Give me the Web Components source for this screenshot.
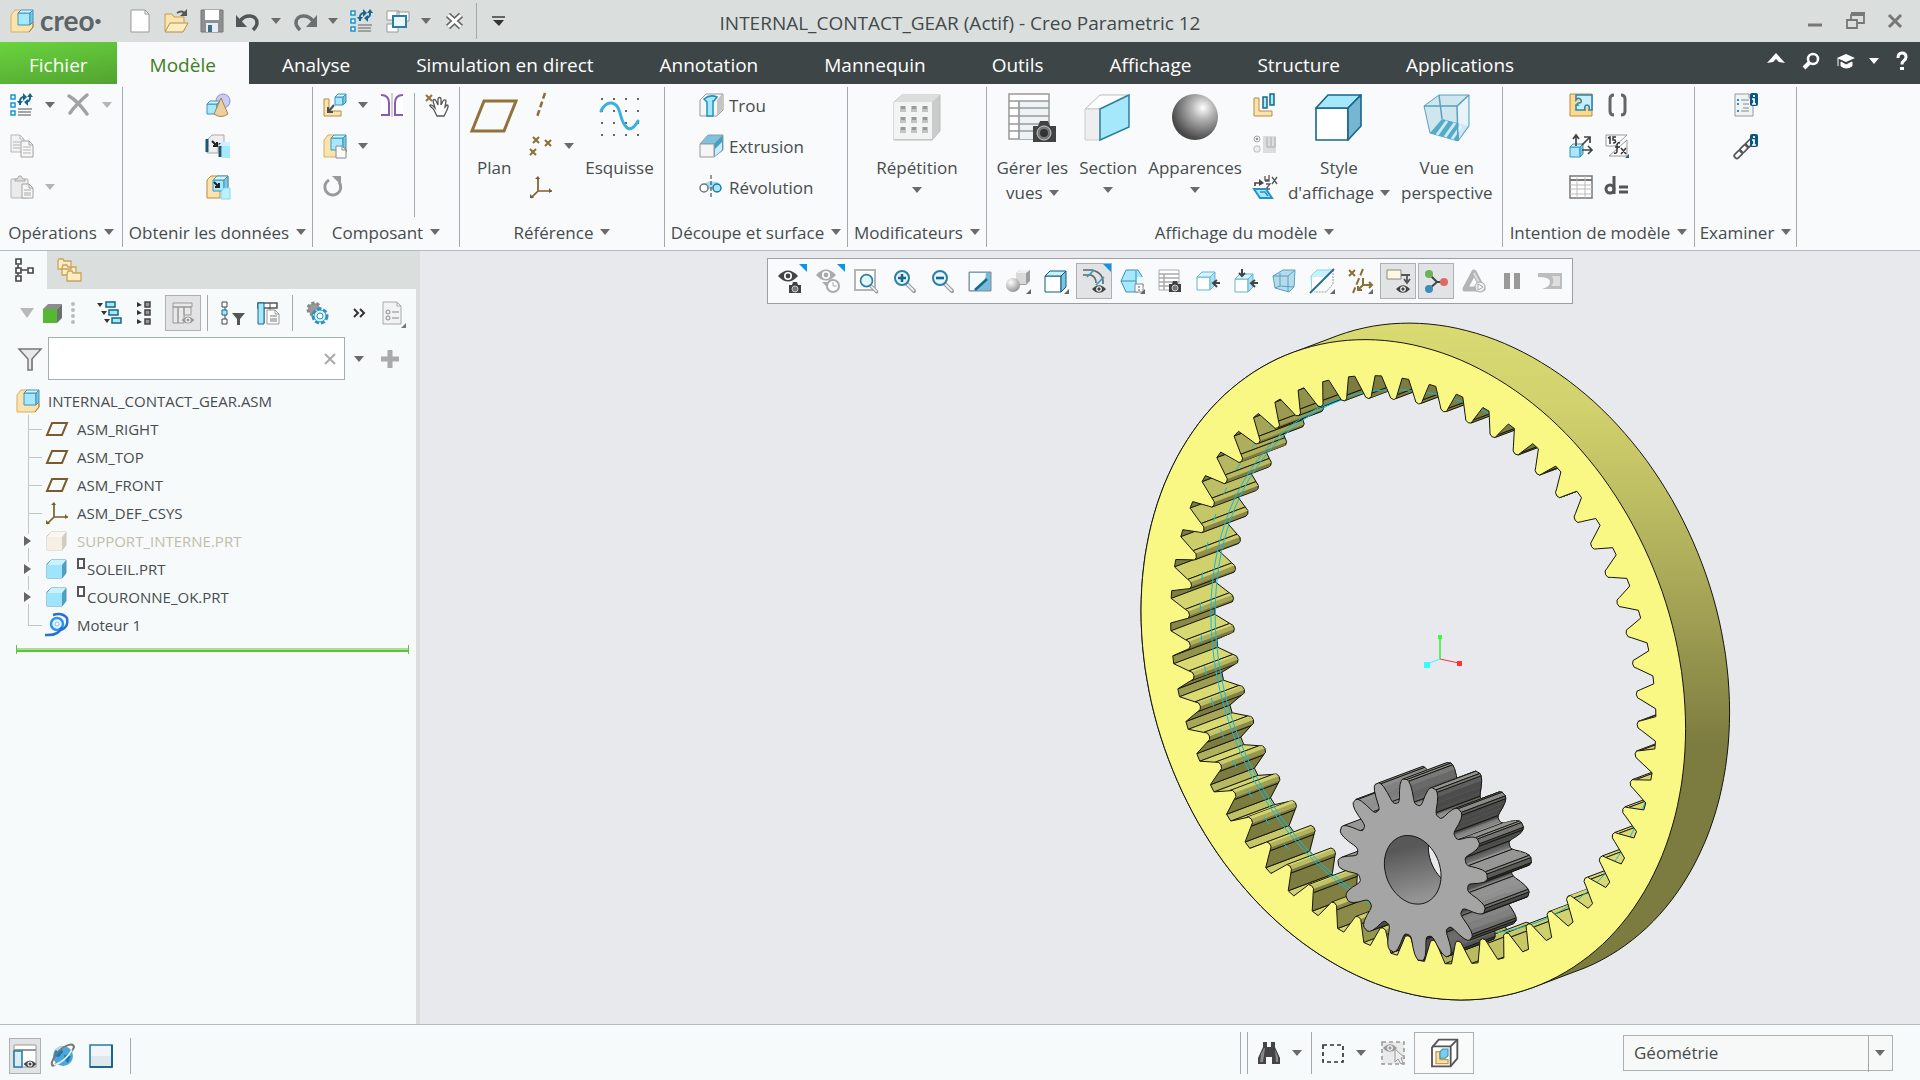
<!DOCTYPE html>
<html lang="fr">
<head>
<meta charset="utf-8">
<title>INTERNAL_CONTACT_GEAR (Actif) - Creo Parametric 12</title>
<style>
html,body{margin:0;height:100%}
body{font-family:"Open Sans","Noto Sans",sans-serif;font-size:17px;color:#474c4e;
--line:#b0bbbd;--sep:#a3a9ab;--panel:#f6fafb;--ribbon:#f8fafc;--bar:#dadfde;--dark:#3e4546}
</style>
</head>
<body>
<creo-app></creo-app>
<script>
const ICONS = (() => {
  const B = '#a6e8ff', D = '#17668c', T = '#fbe3ae', TD = '#b98c3c', K = '#4a4f52';
  const cube = (x, y, s, d, f = B, st = '#3f93b8', top = '#d8f6ff', side = '#7dc6e6') =>
    `<g stroke="${st}" stroke-linejoin="round"><path d="M${x} ${y + d}h${s}v${s}h${-s}z" fill="${f}"/><path d="M${x} ${y + d}l${d} ${-d}h${s}l${-d} ${d}z" fill="${top}"/><path d="M${x + s} ${y + d}l${d} ${-d}v${s}l${-d} ${d}z" fill="${side}"/></g>`;
  const eye = (x, y, w, c = '#444') => `<g transform="translate(${x} ${y}) scale(${w / 20})"><path d="M-10 0Q0-11 10 0Q0 11-10 0z" fill="${c}"/><circle r="4" fill="#fff"/><circle r="2.4" fill="${c}"/></g>`;
  const cam = (x, y) => `<g transform="translate(${x} ${y})"><path d="M0 3h3l1-3h4l1 3h3v8H0z" fill="#3e4042"/><circle cx="6" cy="7" r="3" fill="#777" stroke="#ccc"/></g>`;
  const tick = '<path d="M25 20v5h-5z" fill="#666"/>';
  const page = (x, y, w, h, f = '#fff', s = '#999') => `<path d="M${x} ${y}h${w - 4}l4 4v${h - 4}h${-w}z" fill="${f}" stroke="${s}"/><path d="M${x + w - 4} ${y}v4h4" fill="none" stroke="${s}"/>`;
  const mag = (s = '') => `<path d="M15 15l7 7" stroke="#999" stroke-width="4" stroke-linecap="round"/><path d="M15 15l7 7" stroke="#eee" stroke-width="2"/><circle cx="10" cy="9" r="7" fill="#e4f6fd" stroke="#2d7ea6" stroke-width="2"/>${s}`;
  const asm = `<path d="M1 6l4-5h6v13h9l3 1v3l-4 5H1z" fill="${T}" stroke="#d9ae62"/><path d="M19 23l4-5v-5" stroke="#a97b2c" fill="none"/>${cube(8, 1, 12, 3)}`;
  const S24 = {
    asm,
    regen: `<g fill="#fff" stroke="#1698cf" stroke-width="1.5"><path d="M1 2h4v4H1zM1 10h4v4H1zM1 18h4v4H1z"/></g><path d="M8 16h14M8 19h13M8 22h13" stroke="#8b8b8b" stroke-width="1.5"/><path d="M10 12V8a4 4 0 0 1 4-4" fill="none" stroke="${D}" stroke-width="2"/><path d="M13 0l4 4-4 4zM7 8h6l-3 4z" fill="${D}"/><path d="M20 2v3a4 4 0 0 1-4 4" fill="none" stroke="${D}" stroke-width="2"/><path d="M23 4h-6l3-4zM18 6v7l-4-4z" fill="${D}"/>`,
    del: `<path d="M2 3c7 4 13 11 18 18M20 2C13 8 8 13 3 20" stroke="#a2a2a2" stroke-width="3.5" fill="none" stroke-linecap="round"/>`,
    copy: page(1, 1, 13, 17, '#f2f2f2', '#b8b8b8') + page(11, 7, 12, 16, '#f7f7f7', '#a2a2a2') + `<path d="M3 8h7M3 11h7M3 14h7M13 13h8M13 16h8M13 19h8" stroke="#b4b4b4"/>`,
    paste: `<rect x="1" y="4" width="17" height="19" rx="1" fill="#ebebeb" stroke="#b5b5b5"/><path d="M5 6V4h2l2-3h2l2 3h2v2z" fill="#ddd" stroke="#aaa"/>` + page(12, 9, 11, 14, '#f7f7f7', '#a2a2a2') + `<path d="M14 15h7M14 18h7M14 20h7" stroke="#aaa"/>`,
    shapes: `<circle cx="17" cy="8" r="7" fill="#c9cdf3" stroke="#8a90cf"/>${cube(1, 8, 10, 3)}<path d="M15 5l7 16q-7 5-14 0z" fill="#ecd0a0" stroke="#a98549"/>`,
    merge: `<path d="M1 6l5-5h12v12h-6v6H1z" fill="#eee" stroke="#aaa"/><path d="M1 5v13M14 9v14" stroke="#1c5677" stroke-width="3"/><path d="M6 7l5 5M11 8v4H7" stroke="#222" stroke-width="2"/><path d="M12 12l4-4h8v4z" fill="#cdf2ff"/><path d="M16 12h8v12h-8z" fill="${B}"/>`,
    shrink: `<path d="M1 5l4-4h17v14h-8v8H1z" fill="${T}" stroke="${TD}"/>${cube(7, 1, 11, 4)}<path d="M8 7l5 5M13 8v4H9" stroke="#222" stroke-width="2"/><path d="M15 17l3-4h6v11h-9z" fill="#baf0ff" stroke="#8fd3ee"/>`,
    assemble: `<path d="M1 6h5v12h12v5H1z" fill="${T}" stroke="${TD}"/>${cube(12, 1, 8, 3)}<path d="M11 12l-5 6M5 14v5h5" stroke="${K}" stroke-width="2" fill="none"/>`,
    create: asm + page(13, 12, 10, 12, '#fafafa', '#888'),
    mirror: `<path d="M1 2c5 0 8 3 8 8v12H1M23 2c-5 0-8 3-8 8v12h8" fill="#fff" stroke="#8a5cae" stroke-width="2"/><path d="M12 0v24" stroke="#aaa"/>`,
    hand: `<path d="M1 2l6 6M7 2L1 8" stroke="#93713a" stroke-width="2"/><path d="M9 17c-2-3-5-4-4-5 2-1 4 2 5 3L8 8c0-2 2-2 3 0l2 4V6c0-2 3-2 3 0v6l2-4c1-2 3-1 3 0l-1 6 2-2c2 0 1 3-1 7l-2 4h-7z" fill="#fff" stroke="#555" stroke-width="1.3"/>`,
    update: `<path d="M6 5a8 8 0 1 0 10 2" fill="none" stroke="#999" stroke-width="3"/><path d="M9 1h9v9z" fill="#999"/>`,
    axis: `<path d="M16 0L8 24" stroke="#8d6c35" stroke-width="2.5" stroke-dasharray="6 3"/>`,
    points: `<g stroke="#8d6c35" stroke-width="2"><path d="M4 3l6 6M10 3l-6 6M16 6l6 6M22 6l-6 6M1 15l6 6M7 15l-6 6"/></g>`,
    csys: `<g stroke="#7c5d2c" stroke-width="1.7" fill="#7c5d2c"><path d="M9 2v14h14M9 16l-7 7" fill="none"/><path d="M6 4l3-3 2 3zM20 13l3 3-3 2zM1 19v4h4z" stroke="none"/></g>`,
    hole: `<path d="M1 7l6-6h17v16l-6 6H1z" fill="#f6f6f6" stroke="#999"/><path d="M18 7v16l5-6V1z" fill="#c4c4c4"/><path d="M5 6q6-5 13-2l-3 4h-1v15H8V9z" fill="${B}" stroke="#258fbd" stroke-width="1.5"/>`,
    extrude: `<path d="M1 10l8-9h15L15 10z" fill="#7ac4e2" stroke="#999"/><path d="M15 10l9-9v15l-9 7z" fill="#3fa0cc" stroke="#999"/><path d="M16 15l7-7v8l-7 6z" fill="#c5efff"/><path d="M1 10h14v13H1z" fill="#f5f5f5" stroke="#999"/>`,
    revolve: `<path d="M4 11q2-6 14-4l4 3-6 4H8z" fill="#9bdcf5"/><circle cx="5" cy="13" r="4" fill="#fff" stroke="#777" stroke-width="1.5"/><circle cx="18" cy="13" r="4" fill="${B}" stroke="#2079a3" stroke-width="1.5"/><path d="M12 0v24" stroke="#333" stroke-dasharray="4 2"/>`,
    explode: `<path d="M1 5h5v13h13v5H1z" fill="${T}" stroke="${TD}"/><g fill="${B}" stroke="${D}" stroke-width="1.5"><path d="M10 4h4v11h-4zM17 1h4v11h-4z"/></g>`,
    exgray: `<circle cx="4" cy="5" r="3" fill="#eee" stroke="#aaa"/><circle cx="4" cy="5" r="1" fill="#777"/><rect x="1" y="12" width="6" height="6" rx="2" fill="#eee" stroke="#bbb"/><path d="M10 2h13v17H10z" fill="#ddd"/><path d="M14 3v10h8V3M18 3v9" fill="none" stroke="#aaa"/>`,
    xyz: `<path d="M2 11V8h6" stroke="#444" stroke-width="1.6" fill="none"/><path d="M6 4l5 4-5 3z" fill="#444"/><path d="M12 1v4h4M16 0v6h-4M19 2l5 7M24 2l-5 7M13 9h4l-4 5h4" stroke="#555" stroke-width="1.3" fill="none"/><path d="M1 14h12l6 9H7z" fill="${B}" stroke="#2492c4" stroke-width="2"/><path d="M7 17h5l3 4" stroke="#2492c4" fill="none" stroke-width="1.5"/>`,
    puzzle: `<path d="M1 1h22v22H1z" fill="#fbd98e" stroke="${TD}"/><path d="M7 2h16v15h-3q1-5-2-5t-2 5H7v-5h2q-2-2 1-2 3 0 2-3-2-3-4-1l-1 1z" fill="#c5efff" stroke="#3186ab" stroke-width="1.6"/>`,
    brackets: `<path d="M9 2Q5 2 5 6v12q0 4 4 4M16 2q4 0 4 4v12q0 4-4 4" fill="none" stroke="#666" stroke-width="3"/>`,
    arrows: `${cube(1, 10, 10, 3)}<g stroke="#444" stroke-width="1.7" fill="none"><path d="M7 12V2M4 5l3-4 3 4M13 11l7-7M15 3h6v6M13 16h9M19 12l4 4-4 4"/></g>`,
    fx: `<path d="M1 1h21L10 12H1z" fill="#fff" stroke="#999"/><path d="M22 6v16H4z" fill="#fff" stroke="#999"/><path d="M3 4l2-1v7M11 3H8v3h2q2 3-2 3M15 9q-3-1-3 3v5q0 3-3 2M10 13h5M16 14l5 6M21 14l-5 6" fill="none" stroke="#333" stroke-width="1.5"/><path d="M24 20v4h-4z" fill="${D}"/>`,
    table: `<path d="M1 1h22v22H1z" fill="#fff" stroke="#777" stroke-width="1.5"/><path d="M1 5h22" stroke="#777" stroke-width="2"/><path d="M1 10h22M1 14h22M1 19h22M8 1v22M16 1v22" stroke="#bbb"/>`,
    deq: `<path d="M9 1v18" stroke="#555" stroke-width="3"/><circle cx="5" cy="14" r="4" fill="none" stroke="#555" stroke-width="3"/><path d="M14 12h9M14 17h9" stroke="#555" stroke-width="3"/>`,
    info: page(1, 1, 18, 22, '#eef3f5') + `<path d="M3 7h2M3 11h2M3 18h2" stroke="#2492c4" stroke-width="2"/><path d="M7 7h8M9 11h6M9 15h6M7 18h8" stroke="#888"/><rect x="16" y="0" width="8" height="13" rx="2" fill="#0b577b"/><path d="M20 2v2M18 6h2v5M18 11h4" stroke="#fff" stroke-width="1.7" fill="none"/>`,
    chain: `<g fill="none" stroke="#555" stroke-width="1.7" transform="rotate(-45 10 14)"><rect x="-3" y="12" width="9" height="5" rx="2"/><rect x="5" y="12" width="9" height="5" rx="2"/><rect x="13" y="12" width="9" height="5" rx="2"/></g><rect x="16" y="0" width="8" height="13" rx="2" fill="#0b577b"/><path d="M20 2v2M18 6h2v5M18 11h4" stroke="#fff" stroke-width="1.7" fill="none"/>`,
    newf: page(3, 1, 18, 22),
    open: `<path d="M1 22V5h7l2 3h10v5" fill="${T}" stroke="#c59a4d"/><path d="M1 23l5-9h18l-5 9z" fill="#fdecc4" stroke="#b98c3c"/><path d="M13 4q6-4 8 2" fill="none" stroke="#555" stroke-width="2"/><path d="M23 0v7h-7z" fill="#555"/>`,
    save: `<path d="M1 1h22v22H1z" fill="#8d8f90" stroke="#777"/><path d="M5 1h14v10H5z" fill="#fff"/><path d="M6 14h12v9H6z" fill="#e6eef2"/><path d="M8 16h4v7H8z" fill="#3f6f88"/>`,
    undo: `<path d="M4 12c5-7 17-7 17 2 0 3-2 5-4 7" fill="none" stroke="#515658" stroke-width="3.5"/><path d="M0 6v12h11z" fill="#515658"/>`,
    redo: `<path d="M20 12C15 5 3 5 3 14c0 3 2 5 4 7" fill="none" stroke="#6c7072" stroke-width="3.5"/><path d="M24 6v12H13z" fill="#6c7072"/>`,
    windows: `<g fill="#fff" stroke="#999"><path d="M1 2h12v9H1zM11 3h12v9H11zM1 15h11v8H1z"/></g><path d="M7 7h13v11H7z" fill="#eaf6fb" stroke="#2a7fa6" stroke-width="2"/>`,
    closew: `<path d="M5 6l13 12M18 6L5 18" stroke="#666" stroke-width="6"/><path d="M5 6l13 12M18 6L5 18" stroke="#fff" stroke-width="3"/>`,
    qat: `<path d="M6 8h13" stroke="#444" stroke-width="1.6"/><path d="M7 11h11l-5 6z" fill="#333"/>`,
    min: `<path d="M5 16h14" stroke="#777" stroke-width="3"/>`,
    restore: `<path d="M8 6h13v8H8z" fill="none" stroke="#777" stroke-width="1.8"/><path d="M8 4h14" stroke="#777" stroke-width="2"/><path d="M4 11h10v8H4z" fill="#dadfde" stroke="#777" stroke-width="1.8"/>`,
    close: `<path d="M6 6l12 12M18 6L6 18" stroke="#777" stroke-width="3"/>`,
    chev: `<path d="M3 14l9-10 9 10-6-1-3-3-3 3z" fill="#fff"/>`,
    search: `<circle cx="14" cy="10" r="5" fill="none" stroke="#fff" stroke-width="2.5"/><path d="M10 14l-5 5" stroke="#fff" stroke-width="4"/>`,
    hat: `<path d="M12 5l9 4-9 4-9-4z" fill="#fff"/><path d="M7 13l5 3 6-3v4q-6 4-11 0zM4 9v8" fill="#fff" stroke="#fff"/>`,
    help: `<path d="M8 9q0-5 4-5t4 4q0 2-2 3.500t-2 4" fill="none" stroke="#fff" stroke-width="3"/><path d="M10 18h4v3h-4z" fill="#fff"/>`,
    tree: `<g fill="#fff" stroke="#444" stroke-width="1.6"><path d="M6 7v3M6 14v3M9 12h6"/><path d="M4 1h5v5H4zM4 10h5v5H4zM4 18h5v5H4zM16 10h5v5h-5z"/></g>`,
    folders: `<g fill="#fdecc4" stroke="#c9a35b" stroke-width="1.3"><path d="M1 3l1-2h4l1 2h7v8H1zM5 10l1-3h4l1 2h8v8H5z"/><path d="M10 16l1-3h4l1 2h8v8H10z"/></g>`,
    green: `<path d="M3 8h14v14H3z" fill="#56b832"/><path d="M3 8l5-5h14l-5 5z" fill="#8b8d8d"/><path d="M17 8l5-5v14l-5 5z" fill="#6e7070"/>`,
    dots: `<g fill="#bbb"><circle cx="12" cy="3" r="2"/><circle cx="12" cy="9" r="2"/><circle cx="12" cy="15" r="2"/><circle cx="12" cy="21" r="2"/></g>`,
    layers: `<g fill="${B}" stroke="${D}" stroke-width="1.5"><path d="M9 1h9v5H9zM12 9h9v5h-9zM15 17h9v5h-9z"/></g><path d="M0 2h6l-3 4zM4 10h6l-3 4zM7 18h6l-3 4z" fill="#333"/>`,
    expand: `<g fill="#999" stroke="#444" stroke-width="1.5"><path d="M12 1h5v5h-5zM12 9h5v5h-5zM12 18h5v5h-5z"/></g><path d="M4 1l5 3-5 2zM4 9l5 3-5 2zM4 18l5 3-5 2z" fill="#333"/>`,
    cols: `<path d="M2 2h19v4H2zM2 6h5v16H2zM7 6h6v16H7zM13 6h7v8h-7z" fill="#e8e8e8" stroke="#999"/>${eye(17, 19, 13, '#999')}`,
    filter: `<g fill="#fff" stroke="#444"><path d="M4 5v14"/><path d="M1 1h5v5H1zM1 18h5v5H1z"/><path d="M1 9h5v5H1z" fill="${B}" stroke="${D}"/></g><path d="M11 12h13l-5 6v6h-3v-6z" fill="#555"/>`,
    colset: `<path d="M1 2h19v5H1z" fill="#fff" stroke="#555" stroke-width="1.5"/><path d="M7 7v15M13 2v8" stroke="#555"/><path d="M1 2h6v21H1z" fill="${B}" stroke="${D}"/>${page(10, 9, 12, 14)}<path d="M13 15h7M13 18h7M13 20h7" stroke="#777"/>`,
    gears: `<circle cx="9" cy="8" r="6" fill="#999" stroke="#888" stroke-width="3" stroke-dasharray="3 2"/><circle cx="15" cy="15" r="7" fill="#fff" stroke="#2b91c0" stroke-width="3" stroke-dasharray="4 2"/><circle cx="15" cy="15" r="6" fill="#d7f3ff" stroke="#2b91c0"/><circle cx="15" cy="15" r="3" fill="#fff" stroke="#2b91c0"/>`,
    more: `<path d="M6 8l4 4-4 4M12 8l4 4-4 4" fill="none" stroke="#333" stroke-width="2"/>`,
    listset: page(1, 1, 18, 22, '#f0f2f3', '#aaa') + `<g fill="none" stroke="#888"><circle cx="6" cy="11" r="2"/><circle cx="6" cy="17" r="2"/><path d="M10 11h7M10 17h7"/></g><path d="M24 22v5h-5z" fill="#777"/>`,
    funnel: `<path d="M1 2h22l-9 10v11h-4V12z" fill="#e8e9ea" stroke="#777" stroke-width="1.5"/><path d="M14 12v11" stroke="#888" stroke-width="2"/>`,
    plus: `<path d="M12 3v18M3 12h18" stroke="#aaa" stroke-width="5"/>`,
    x: `<path d="M7 7l10 10M17 7L7 17" stroke="#aaa" stroke-width="2"/>`,
    plane: `<path d="M7 6h15l-5 12H2z" fill="none" stroke="#7a5c2c" stroke-width="2"/>`,
    part: `<path d="M2 7l4-4h15v13l-4 5H2z" fill="#4d9fc4" stroke="#5796b5"/><path d="M2 8h15v13H2z" fill="#9fe4fd"/><path d="M2 8l4-5h15l-4 5z" fill="#c9f2ff"/>`,
    partoff: `<path d="M2 7l4-4h15v13l-4 5H2z" fill="#d2cec5" stroke="#ccc6ba"/><path d="M2 8h15v13H2z" fill="#f6efe3"/><path d="M2 8l4-5h15l-4 5z" fill="#faf7f0"/>`,
    motor: `<path d="M8 2q9-3 14 3 2 9-6 12" fill="none" stroke="#2a6fd8" stroke-width="2.5"/><circle cx="12" cy="11" r="6" fill="#e8f5ff" stroke="#2e94ee" stroke-width="2.5"/><path d="M17 14q-3 9-17 8" fill="none" stroke="#2a6fd8" stroke-width="2.5"/><circle cx="12" cy="11" r="2" fill="#fff" stroke="#7cc4f3"/>`,
    eyecam: eye(10, 7, 20) + cam(11, 13),
    eyeclock: eye(10, 6, 20, '#aaa') + `<circle cx="17" cy="17" r="6" fill="#fff" stroke="#aaa" stroke-width="2"/><path d="M17 13v4h4" fill="none" stroke="#aaa"/><path d="M6 13h6v6z" fill="#aaa"/>`,
    refit: `<path d="M1 1h20v20H1z" fill="#fff" stroke="#b5b5b5" stroke-width="2"/><g transform="translate(4 4) scale(.85)">${mag()}</g>`,
    zin: mag(`<path d="M10 5v8M6 9h8" stroke="${D}" stroke-width="2.6"/>`),
    zout: mag(`<path d="M6 9h8" stroke="${D}" stroke-width="2.6"/>`),
    repaint: `<path d="M1 3h22v19H1z" fill="#75bcdc" stroke="#888"/><path d="M2 4h16q0 10-10 17H2z" fill="#f4fbfe"/><path d="M19 10l-12 11" stroke="${D}" stroke-width="2.5"/>`,
    render: `<defs><radialGradient id="rg" cx=".35" cy=".3" r=".7"><stop offset="0" stop-color="#fff"/><stop offset="1" stop-color="#999"/></radialGradient></defs><path d="M10 4l4-3h10v11l-4 4H10z" fill="#9d9d9d"/><path d="M10 4l4-3h10l-4 3z" fill="#f0f0f0"/><path d="M10 4h10v11H10z" fill="#d9d9d9"/><circle cx="7" cy="16" r="7" fill="url(#rg)"/>` + tick,
    style: cube(1, 2, 16, 5, '#fff', '#0f5a7e', '#c5f1ff', '#7dc3e0') + tick,
    curveeye: `<path d="M1 1h9q12 3 11 14M1 6h8q5 2 5 8" fill="none" stroke="#666" stroke-width="1.6"/><path d="M5 8l7-7M14 16l8-8" stroke="#2d9cc5" stroke-width="1.6"/>${eye(17, 20, 14)}`,
    hex: `<path d="M1 12L6 1h12l5 8v8l-5 6H6z" fill="${B}" stroke="#3c90b4"/><path d="M1 12h15M16 2v20" stroke="#3c90b4"/><path d="M17 8h7v7h-7z" fill="#e8fbff"/><path d="M15 15h8v8h-8z" fill="#fff" stroke="#888"/><path d="M18 18h2M18 21h2" stroke="#555"/>` + tick,
    viewmgr: `<path d="M1 1h20v20H1z" fill="#fff" stroke="#aaa"/><path d="M1 5h20M1 9h20M1 13h20M1 17h20M6 5v16" stroke="#aaa" stroke-width="1.5"/>` + cam(11, 12),
    cubel: cube(1, 3, 13, 5, '#fff', '#64b4d4', '#d6f5ff', '#a9dff3') + `<path d="M24 14h-6M21 11l-4 3 4 4" stroke="#444" stroke-width="2" fill="none"/>`,
    cubed: cube(1, 5, 13, 5, '#fff', '#64b4d4', '#d6f5ff', '#a9dff3') + `<path d="M24 14h-6M21 11l-4 3 4 4M8 0v6M5 4l3 3 3-3" stroke="#444" stroke-width="2" fill="none"/>`,
    persp: `<path d="M1 7l10-6h12l-1 17-5 5-14-4z" fill="#b5dcec" stroke="#58a0bf"/><path d="M1 7h15l7-6M16 7v16M8 4v13l14 1M8 17l-5 2" fill="none" stroke="#58a0bf"/>`,
    section: `<path d="M1 7l6-6h16L2 22z" fill="#c9f2ff" stroke="#8ed0e8"/><path d="M2 8h14v3L2 22z" fill="#fff"/><path d="M23 1v14l-7 8H4" fill="none" stroke="#999" stroke-dasharray="2 1"/><path d="M24 0L0 24" stroke="#2b6c8c" stroke-width="2"/>` + tick,
    datum: `<g stroke="#8d6c35" stroke-width="2" fill="none"><path d="M1 1l6 6M7 1L1 7"/><path d="M15 0L5 24" stroke-dasharray="7 3"/><path d="M15 9v7h9M15 16l-5 5M10 17v4h4M21 13l3 3-3 3"/></g>` + tick,
    annot: `<path d="M1 1h14v9H1z" fill="#fff8e0" stroke="#888"/><path d="M15 6h9M21 6v8M18 10l3 4 3-4" stroke="#555" stroke-width="1.8" fill="none"/>${eye(17, 20, 14)}`,
    spin: `<path d="M5 5l8 8h8M13 13l-8 7" stroke="#444" stroke-width="2" fill="none"/><circle cx="5" cy="5" r="4" fill="#6bb257"/><circle cx="20" cy="13" r="4" fill="#de6a68"/><circle cx="5" cy="20" r="4" fill="#3e8cbb"/>`,
    sim: `<path d="M12 3l9 17H3z" fill="none" stroke="#b4b4b4" stroke-width="5" stroke-linejoin="round"/><path d="M12 4l8 15" stroke="#ddd" stroke-width="2"/><circle cx="18" cy="18" r="5" fill="#eee" stroke="#aaa"/><path d="M16 15l5 3-5 3z" fill="#fff" stroke="#aaa"/>`,
    pause: `<path d="M4 4h6v16H4zM14 4h6v16h-6z" fill="#999"/>`,
    shade: `<path d="M0 4h24v16H4q8-2 8-7T0 8z" fill="#bdbdbd"/><path d="M14 7h8v10h-9q4-4 1-10z" fill="#dedede"/>`,
    panel: `<path d="M1 1h22v22H1z" fill="#fff" stroke="#999"/><path d="M1 6h22" stroke="#999" stroke-width="2"/><path d="M1 7h8v16H1z" fill="#d8edf6" stroke="#2a7fa6" stroke-width="1.6"/>${eye(17, 20, 13)}`,
    globe: `<circle cx="12" cy="12" r="10" fill="#4aa9da"/><path d="M5 6q6-3 7 2l-4 5-5-1zM13 11l7 1-3 7-3-3z" fill="#1f78ab"/><path d="M4 5q6-4 11-2l-8 5z" fill="#a8dcf4"/><path d="M6 19Q0 25 1 18 4 9 13 3q9-5 10 0-1 3-3 5" fill="none" stroke="#777" stroke-width="2"/><path d="M3 21Q14 18 21 6" fill="none" stroke="#eee" stroke-width="1.5"/>`,
    square: `<path d="M1 1h22v22H1z" fill="#dfe8ed" stroke="#2a7fa6" stroke-width="1.6"/><path d="M2 2h20v10H2z" fill="#f1f5f7"/><path d="M23 1v22H1" fill="none" stroke="#0f5474" stroke-width="1.5"/>`,
    binoc: `<path d="M6 1h4v5h4V1h4v5l5 11v6h-8v-7h-6v7H1v-6L6 6z" fill="#444"/><path d="M4 13l3-6h1l-2 14H3zM18 8l3 8v5h-2z" fill="#888"/>`,
    dash: `<path d="M2 4h20v17H2z" fill="none" stroke="#333" stroke-width="1.7" stroke-dasharray="4 3"/>`,
    pick: `<path d="M1 1h22v22H1z" fill="#e9eaea" stroke="#999" stroke-width="1.5" stroke-dasharray="4 3"/>${eye(9, 7, 14, '#999')}<path d="M14 8v13l3-3 3 5 2-1-2-5h4z" fill="#eee" stroke="#999"/>`,
    box: `<path d="M3 8l5-6h14v14l-5 6H3z" fill="#fff" stroke="#555" stroke-width="1.4"/><path d="M3 7h14v15M17 7l5-5" fill="none" stroke="#555" stroke-width="1.4"/><path d="M6 11h3v6h6v3H6z" fill="${T}" stroke="#d29a3d"/><path d="M9 11l2-2h4v5l-2 2H9z" fill="#79cdf0" stroke="#3a93b9" stroke-width=".8"/>`
  };
  const S48 = {
    bplane: `<path d="M14 8h32L34 38H2z" fill="none" stroke="#927238" stroke-width="3"/>`,
    bsketch: `<g fill="#666">${[5, 17, 29, 41].map(y => [6, 18, 30, 42].map(x => `<path d="M${x} ${y}h2v2h-2z"/>`).join('')).join('')}</g><path d="M6 18C12 6 22 8 25 20S34 44 43 28" fill="none" stroke="#3cb0df" stroke-width="3" stroke-linecap="round"/>`,
    bpattern: `<path d="M1 9l8-7h38v36l-8 9H1z" fill="#c9cccb" stroke="#bbb"/><path d="M1 9h38v37H1z" fill="#f2f4f3"/><path d="M1 9l8-7h38l-8 7z" fill="#dcdedd"/>${[13, 24, 34].map(y => [7, 18, 29].map(x => `<path d="M${x} ${y}h6v6h-6z" fill="#c2c4c3"/><path d="M${x + 1} ${y}h4v3h-4z" fill="#999"/>`).join('')).join('')}`,
    bviews: `<path d="M1 1h40v45H1z" fill="#fff" stroke="#999" stroke-width="1.5"/><path d="M12 8h28v38H12z" fill="#edf2f5"/><path d="M1 8h40M1 15h40M1 23h40M1 31h40M1 38h40M11 8v38" stroke="#999" stroke-width="1.7"/><path d="M25 33h5l2-5h8l2 5h6v16H25z" fill="#404244"/><circle cx="36" cy="40" r="7" fill="#777" stroke="#ccc"/><circle cx="36" cy="40" r="4" fill="#333"/>`,
    bsection: `<path d="M1 16L16 2h28L16 16z" fill="#fff" stroke="#bbb"/><path d="M1 16h15v31H1z" fill="#eee" stroke="#ccc"/><path d="M16 16L45 2v32L16 47z" fill="#a6e8fb" stroke="#2e7ea0" stroke-width="1.5"/>`,
    bsphere: `<defs><radialGradient id="sg" cx=".67" cy=".3" r=".7"><stop offset="0" stop-color="#fff"/><stop offset=".35" stop-color="#b5b5b5"/><stop offset="1" stop-color="#484848"/></radialGradient></defs><circle cx="24" cy="24" r="23" fill="url(#sg)"/>`,
    bstyle: `<g stroke="#17668c" stroke-width="1.6" stroke-linejoin="round"><path d="M1 15h32v32H1z" fill="#fff"/><path d="M1 15L13 2h33L33 15z" fill="#a6e8fb"/><path d="M33 15L46 2v31L33 47z" fill="#77b6d2"/></g>`,
    bpersp: `<path d="M1 13L16 2h30v31L35 48 7 40z" fill="#cfe6ee" stroke="#58a0bf"/><path d="M7 40l12-14 27 7-11 15z" fill="#57a9c9"/><path d="M14 42l10-14M22 44l10-14M29 46l9-13" stroke="#c9ecf6" stroke-width="3"/><path d="M1 13h33l12-11M34 13l1 35M16 2l3 24" fill="none" stroke="#58a0bf" stroke-width="1.5"/><path d="M35 14L45 4v29L36 46z" fill="#eef8fb" opacity=".8"/>`
  };
  return { S24, S48 };
})();

const define = (tag, render) => customElements.define(tag, class extends HTMLElement {
  connectedCallback() {
    if (this.shadowRoot) return;
    const t = document.createElement('template');
    t.innerHTML = render(this);
    this.attachShadow({ mode: 'open' }).append(t.content.cloneNode(true));
  }
});
const BTN = 'button{all:unset;box-sizing:border-box;display:flex;align-items:center;cursor:pointer}';
const has = (el, a) => el.hasAttribute(a);
const at = (el, a, d = '') => el.getAttribute(a) ?? d;

define('c-icon', el => {
  const n = at(el, 'name'), big = n in ICONS.S48, s = at(el, 'size', big ? 48 : 24);
  return `<style>:host{display:block;flex:none;width:${s}px;height:${s}px}svg{display:block;overflow:visible;width:100%;height:100%}</style><svg viewBox="0 0 ${big ? '48 48' : '24 24'}" aria-hidden="true">${big ? ICONS.S48[n] : ICONS.S24[n]}</svg>`;
});
define('c-caret', () => `<style>:host{display:block;flex:none;width:10px;height:6px;color:#6b6b6b}svg{display:block;width:100%;height:100%}</style><svg viewBox="0 0 10 6" preserveAspectRatio="none" aria-hidden="true"><path d="M0 0h10L5 6z" fill="currentColor"/></svg>`);
define('c-sep', () => `<style>:host{display:block;flex:none;width:1px;align-self:stretch;background:var(--sep)}</style>`);

/* icon button, optionally with a text beside it or a menu arrow */
define('tool-btn', el => `<style>${BTN}:host{display:block;flex:none}button{gap:${has(el, 'text') ? 6 : 11}px;min-height:24px}span{line-height:22px;padding-top:2px}
.off c-caret{color:#b5b5b5}
.pressed{justify-content:center;width:var(--pw,36px);height:36px;background:#e1e3e5;border:1px solid #aeb1b3}
.blue{position:relative}.blue i{position:absolute;right:-5px;top:-5px;border:4px solid;border-color:#0a94f5 #0a94f5 transparent transparent}
.pressed.blue i{right:0;top:0}</style>
<button class="${has(el, 'pressed') ? 'pressed ' : ''}${has(el, 'off') ? 'off ' : ''}${has(el, 'blue') ? 'blue' : ''}" aria-label="${at(el, 'label', at(el, 'text'))}">
<c-icon name="${at(el, 'icon')}" size="${at(el, 'size', 24)}"></c-icon>${has(el, 'text') ? `<span>${at(el, 'text')}</span>` : ''}${has(el, 'menu') ? '<c-caret></c-caret>' : ''}${has(el, 'blue') ? '<i></i>' : ''}</button>`);

/* tall ribbon button: large icon over one or two lines */
define('big-btn', el => {
  const l = at(el, 'text').split('|'), inl = at(el, 'menu') === 'inline';
  return `<style>${BTN}:host{display:block;flex:none}button{flex-direction:column}span{display:flex;align-items:center;gap:6px;height:25px;line-height:25px;white-space:nowrap}
.first{margin-top:14px}.under{justify-content:center;height:20px}</style>
<button><c-icon name="${at(el, 'icon')}"></c-icon>${l.map((t, i) => `<span class="${i ? '' : 'first'}">${t}${inl && i === l.length - 1 ? '<c-caret></c-caret>' : ''}</span>`).join('')}${at(el, 'menu') === 'below' ? '<span class="under"><c-caret></c-caret></span>' : ''}</button>`;
});
define('ribbon-col', () => `<style>:host{display:flex;flex-direction:column;gap:17px;flex:none}</style><slot></slot>`);
define('ribbon-row', () => `<style>:host{display:flex;gap:12px;min-height:24px}</style><slot></slot>`);
define('ribbon-group', el => `<style>${BTN}:host{display:flex;flex-direction:column;flex:none;box-sizing:border-box;width:${at(el, 'w')}px;border-right:1px solid var(--sep)}
.body{display:flex;height:130px;box-sizing:border-box;padding:6px ${at(el, 'pad', 0)}px 0;justify-content:${at(el, 'pack', 'center')};gap:${at(el, 'gap', 12)}px}
button{height:30px;align-self:center;gap:7px;white-space:nowrap}</style>
<div class="body"><slot></slot></div><button>${at(el, 'label')}<c-caret></c-caret></button>`);

define('title-bar', () => `<style>${BTN}:host{display:grid;grid-template-columns:1fr auto 1fr;align-items:center;height:42px;background:var(--bar);color:#42494b}
.l,.r{display:flex;align-items:center}.l{gap:12px;padding-left:10px}.brand{display:flex;align-items:center;gap:6px;width:106px;font:700 28px/28px Lato,sans-serif;color:#5c6466}.brand span{padding-bottom:3px}
.r{justify-content:flex-end;gap:16px;padding-right:13px}h1{margin:0;padding-top:3px;font-size:19px;font-weight:400;line-height:30px}
c-sep{height:36px;align-self:center;margin:0 -3px}.brand sup{font-size:12px;line-height:12px;margin-left:-6px}</style>
<div class="l"><div class="brand"><c-icon name="asm"></c-icon><span>creo</span><sup>•</sup></div>
<tool-btn icon="newf" label="Nouveau"></tool-btn><tool-btn icon="open" label="Ouvrir"></tool-btn><tool-btn icon="save" label="Enregistrer"></tool-btn>
<tool-btn icon="undo" label="Annuler" menu></tool-btn><tool-btn icon="redo" label="Rétablir" menu></tool-btn><tool-btn icon="regen" label="Régénérer"></tool-btn>
<tool-btn icon="windows" label="Fenêtres" menu></tool-btn><tool-btn icon="closew" label="Fermer"></tool-btn><c-sep></c-sep><tool-btn icon="qat" label="Personnaliser"></tool-btn></div>
<h1>INTERNAL_CONTACT_GEAR (Actif) - Creo Parametric 12</h1>
<div class="r"><tool-btn icon="min" label="Réduire"></tool-btn><tool-btn icon="restore" label="Restaurer"></tool-btn><tool-btn icon="close" label="Quitter"></tool-btn></div>`);

define('ribbon-tabs', () => `<style>${BTN}:host{display:flex;height:42px;background:var(--dark);color:#fff;font-size:19px}
button{padding:3px 33px 0;white-space:nowrap}.file{padding:3px 29px 0;background:linear-gradient(170deg,#6ad43d,#52a331)}.on{background:var(--ribbon);color:#3d7f20}
.r{display:flex;gap:11px;margin-left:auto;padding:7px 6px 0 0}.r c-caret{color:#fff;margin:9px 0 0}nav{display:flex}</style>
<nav><button class="file">Fichier</button><button class="on">Modèle</button>${['Analyse', 'Simulation en direct', 'Annotation', 'Mannequin', 'Outils', 'Affichage', 'Structure', 'Applications'].map(t => `<button>${t}</button>`).join('')}</nav>
<div class="r"><tool-btn icon="chev" label="Réduire le ruban"></tool-btn><tool-btn icon="search" label="Rechercher"></tool-btn><tool-btn icon="hat" label="Formation"></tool-btn><c-caret></c-caret><tool-btn icon="help" label="Aide"></tool-btn></div>`);

define('ribbon-bar', () => `<style>:host{display:flex;height:167px;box-sizing:border-box;padding:3px 0;background:var(--ribbon);border-bottom:1px solid var(--line)}.short{height:124px}</style>
<ribbon-group w="123" label="Opérations" pad="10" pack="flex-start"><ribbon-col>
<ribbon-row><tool-btn icon="regen" label="Régénérer" menu></tool-btn><tool-btn icon="del" label="Supprimer" menu off></tool-btn></ribbon-row>
<tool-btn icon="copy" label="Copier"></tool-btn><tool-btn icon="paste" label="Coller" menu off></tool-btn></ribbon-col></ribbon-group>
<ribbon-group w="190" label="Obtenir les données"><ribbon-col><tool-btn icon="shapes" label="Définition utilisateur"></tool-btn><tool-btn icon="merge" label="Copier la géométrie"></tool-btn><tool-btn icon="shrink" label="Emballage"></tool-btn></ribbon-col></ribbon-group>
<ribbon-group w="147" label="Composant" pad="10" gap="10" pack="flex-start"><ribbon-col><ribbon-row><tool-btn icon="assemble" label="Assembler" menu></tool-btn><tool-btn icon="mirror" label="Symétrie"></tool-btn></ribbon-row>
<tool-btn icon="create" label="Créer" menu></tool-btn><tool-btn icon="update" label="Actualiser"></tool-btn></ribbon-col><c-sep class="short"></c-sep><tool-btn icon="hand" label="Glisser"></tool-btn></ribbon-group>
<ribbon-group w="205" label="Référence" gap="11"><big-btn icon="bplane" text="Plan"></big-btn><ribbon-col><tool-btn icon="axis" label="Axe"></tool-btn><tool-btn icon="points" label="Point" menu></tool-btn><tool-btn icon="csys" label="Repère"></tool-btn></ribbon-col><big-btn icon="bsketch" text="Esquisse"></big-btn></ribbon-group>
<ribbon-group w="183" label="Découpe et surface" pad="34" pack="flex-start"><ribbon-col><tool-btn icon="hole" text="Trou"></tool-btn><tool-btn icon="extrude" text="Extrusion"></tool-btn><tool-btn icon="revolve" text="Révolution"></tool-btn></ribbon-col></ribbon-group>
<ribbon-group w="139" label="Modificateurs"><big-btn icon="bpattern" text="Répétition" menu="below"></big-btn></ribbon-group>
<ribbon-group w="516" label="Affichage du modèle" gap="11"><big-btn icon="bviews" text="Gérer les|vues" menu="inline"></big-btn><big-btn icon="bsection" text="Section" menu="below"></big-btn><big-btn icon="bsphere" text="Apparences" menu="below"></big-btn>
<ribbon-col><tool-btn icon="explode" label="Vue éclatée"></tool-btn><tool-btn icon="exgray" label="Basculer l'état"></tool-btn><tool-btn icon="xyz" label="Orientation"></tool-btn></ribbon-col>
<big-btn icon="bstyle" text="Style|d'affichage" menu="inline"></big-btn><big-btn icon="bpersp" text="Vue en|perspective"></big-btn></ribbon-group>
<ribbon-group w="192" label="Intention de modèle"><ribbon-col><tool-btn icon="puzzle" label="Interface"></tool-btn><tool-btn icon="arrows" label="Publier"></tool-btn><tool-btn icon="table" label="Table de famille"></tool-btn></ribbon-col><ribbon-col><tool-btn icon="brackets" label="Paramètres"></tool-btn><tool-btn icon="fx" label="Relations"></tool-btn><tool-btn icon="deq" label="Cotes"></tool-btn></ribbon-col></ribbon-group>
<ribbon-group w="102" label="Examiner"><ribbon-col><tool-btn icon="info" label="Informations"></tool-btn><tool-btn icon="chain" label="Références"></tool-btn></ribbon-col></ribbon-group>`);

define('tree-item', el => `<style>:host{display:flex;align-items:center;height:28px;font-size:15px;box-sizing:border-box;${has(el, 'root') ? 'padding-left:16px' : 'padding-left:28px'}}
.rail{align-self:stretch;flex:none;width:17px;display:flex;align-items:center;background:linear-gradient(#c2c6c7,#c2c6c7) 0 0/1px ${has(el, 'last') ? '50%' : '100%'} no-repeat${has(el, 'branch') ? '' : ',linear-gradient(#c2c6c7,#c2c6c7) 0 50%/14px 1px no-repeat'}}
.rail svg{background:var(--panel);margin-left:-4px}span{white-space:nowrap}.name{margin-left:8px;color:${has(el, 'off') ? '#c3bda8' : 'inherit'}}.flag{align-self:flex-start;flex:none;width:4px;height:7px;border:2px solid #555;background:#fff;margin:3px -6px 0 8px}</style>
${has(el, 'root') ? '' : `<span class="rail">${has(el, 'branch') ? '<svg width="7" height="14"><path d="M0 2l7 5-7 5z" fill="#666"/></svg>' : ''}</span>`}
<c-icon name="${at(el, 'icon')}"></c-icon>${has(el, 'flag') ? '<i class="flag"></i>' : ''}<span class="name"><slot></slot></span>`);

define('model-panel', () => `<style>${BTN}:host{display:flex;flex-direction:column;flex:none;width:420px;box-sizing:border-box;background:var(--panel);border-right:4px solid var(--bar)}
.tabs{display:flex;height:38px;background:var(--bar);align-items:center}.tabs .on{display:flex;align-items:center;justify-content:center;width:47px;height:38px;background:var(--panel)}.tabs .on+tool-btn{margin-left:10px}
.tools{display:flex;align-items:center;height:36px;padding:6px 8px 0 20px}.tools c-caret{color:#b9b9b9;width:14px;height:10px;margin-right:6px}
.find{display:flex;align-items:center;padding:6px 14px 7px 18px}
.box{display:flex;align-items:center;flex:1;margin:0 9px 0 6px;height:43px;box-sizing:border-box;border:1px solid #a5afb2;background:#fff}
input{all:unset;flex:1;min-width:0;height:41px;padding:0 8px;font-size:15px}.box tool-btn{margin-right:2px}
.end{height:5px;margin:6px 7px 0 16px;border:solid #5ec23b;border-width:0 1px;background:linear-gradient(#a8df95 0 2px,#5cc43a 2px) center/100% 4px no-repeat;padding:2px 0;box-sizing:content-box}
label{display:flex;flex:none}</style>
<div class="tabs"><div class="on"><tool-btn icon="tree" label="Arbre du modèle"></tool-btn></div><tool-btn icon="folders" label="Navigateur de dossiers"></tool-btn></div>
<div class="tools"><c-caret></c-caret><tool-btn icon="green" label="Modèle"></tool-btn><tool-btn icon="dots" label="Poignée" style="margin:0 12px 0 -3px"></tool-btn>
<tool-btn icon="layers" label="Calques"></tool-btn><tool-btn icon="expand" label="Développer" style="margin:0 8px 0 12px"></tool-btn><tool-btn pressed icon="cols" label="Colonnes"></tool-btn><c-sep style="margin:0 13px 0 6px"></c-sep>
<tool-btn icon="filter" label="Filtres"></tool-btn><tool-btn icon="colset" label="Colonnes d'arbre" style="margin:0 11px 0 12px"></tool-btn><c-sep></c-sep><tool-btn icon="gears" label="Paramètres" style="margin:0 19px 0 12px"></tool-btn><tool-btn icon="more" label="Plus"></tool-btn><tool-btn icon="listset" label="Affichage" style="margin-left:10px"></tool-btn></div>
<div class="find"><label for="q"><c-icon name="funnel"></c-icon></label><div class="box"><input id="q" type="text" aria-label="Filtrer l'arbre"><tool-btn icon="x" label="Effacer"></tool-btn></div><c-caret></c-caret><tool-btn icon="plus" label="Ajouter" style="margin-left:14px"></tool-btn></div>
<div class="tree"><tree-item root icon="asm">INTERNAL_CONTACT_GEAR.ASM</tree-item><tree-item icon="plane">ASM_RIGHT</tree-item><tree-item icon="plane">ASM_TOP</tree-item><tree-item icon="plane">ASM_FRONT</tree-item><tree-item icon="csys">ASM_DEF_CSYS</tree-item>
<tree-item branch off icon="partoff">SUPPORT_INTERNE.PRT</tree-item><tree-item branch flag icon="part">SOLEIL.PRT</tree-item><tree-item branch flag icon="part">COURONNE_OK.PRT</tree-item><tree-item last icon="motor">Moteur 1</tree-item></div><div class="end"></div>`);

/* 3D scene: both gears are extruded profiles, projected with one affine map */
function gearScene() {
  const EX = 44, EY = -16.5;
  const proj = (cx, cy) => ([x, y]) => [cx + 272.3 * x, cy + 58.8 * x + 324.9 * y];
  const pol = (r, a) => [r * Math.cos(a), r * Math.sin(a)];
  const f = n => n.toFixed(1), P = p => f(p[0]) + ' ' + f(p[1]);
  const path = a => 'M' + a.map(P).join('L') + 'Z';
  const profile = (n, phase, pts) => {
    const out = [], step = 2 * Math.PI / n;
    for (let k = 0; k < n; k++) for (const [u, r, s] of pts) out.push({ p: pol(r, (k + u) * step + phase), s });
    return out;
  };
  const circle = (r, n) => Array.from({ length: n }, (_, k) => ({ p: pol(r, k * 2 * Math.PI / n), s: 0 }));
  const mix = (a, b, t) => 'rgb(' + a.map((v, i) => Math.round(v + (b[i] - v) * t)).join() + ')';
  const walls = (prof, pr, inner, dark, light) => {
    const q = [], n = prof.length, sg = inner ? -1 : 1, pts = prof.map(o => pr(o.p));
    const face = i => { const a = pts[i], b = pts[(i + 1) % n]; return sg * ((b[1] - a[1]) * EX - (b[0] - a[0]) * EY) > 0; };
    for (let i = 0; i < n; i++) {
      if (!face(i)) continue;
      const j = (i + 1) % n, a = pts[i], b = pts[j], A = prof[i].p, C = prof[j].p;
      const nx = sg * (C[1] - A[1]), ny = -sg * (C[0] - A[0]), L = Math.hypot(nx, ny);
      const t = Math.max(0, Math.min(1, (nx * .1 - ny) / L)), col = mix(dark, light, t);
      const a2 = [a[0] + EX, a[1] + EY], b2 = [b[0] + EX, b[1] + EY];
      let s = `<path d="${path([a, b, b2, a2])}" fill="${col}" stroke="${col}" stroke-width=".6"/><path d="M${P(a2)}L${P(b2)}`;
      if (prof[i].s || !face((i - 1 + n) % n)) s += `M${P(a)}L${P(a2)}`;
      if (prof[j].s || !face(j)) s += `M${P(b)}L${P(b2)}`;
      q.push([(a[0] + b[0]) * EX + (a[1] + b[1]) * EY, s + `" class="k"/>`]);
    }
    return q.sort((x, y) => x[0] - y[0]).map(x => x[1]).join('');
  };
  const Y0 = [125, 124, 64], Y1 = [217, 218, 114], G0 = [74, 74, 74], G1 = [150, 150, 150];
  const R = proj(1413.3, 669.8), Q = proj(1412.7, 869.8);
  const outer = circle(1, 180).map(x => R(x.p));
  /* silhouette of the rim: back edge where the wall faces the viewer, front edge elsewhere */
  const rim = outer.map((p, i) => {
    const a = outer[(i + 179) % 180], b = outer[(i + 1) % 180];
    return (b[1] - a[1]) * EX - (b[0] - a[0]) * EY > 0 ? [p[0] + EX, p[1] + EY] : p;
  });
  const ring = profile(56, .0235, [[-.38, .891, 1], [-.16, .838, 1], [-.11, .826, 0], [0, .822, 0], [.11, .826, 0], [.16, .838, 1], [.38, .891, 1]]);
  const sun = profile(16, -.105, [[-.5, .203, 0], [-.4, .204, 0], [-.34, .21, 1], [-.3, .22, 0], [-.25, .24, 0], [-.19, .259, 0], [-.13, .27, 1], [-.07, .275, 1], [.07, .275, 1], [.13, .27, 1], [.19, .259, 0], [.25, .24, 0], [.3, .22, 0], [.34, .21, 1], [.4, .204, 0]]);
  const bore = circle(.104, 60);
  const o = path(outer), h = path(ring.map(x => R(x.p)));
  const sf = path(sun.map(x => Q(x.p))), bf = path(bore.map(x => Q(x.p)));
  const bb = path(bore.map(x => { const p = Q(x.p); return [p[0] + EX, p[1] + EY]; }));
  const arc = (r, dx, dy, a0, a1) => { const pts = []; for (let a = a0; a <= a1; a += .03) { const p = R(pol(r, a)); pts.push([p[0] + dx, p[1] + dy]); } return 'M' + pts.map(P).join('L'); };
  let dash = '';
  for (let k = 20; k < 36; k++) dash += arc(.863, 22, -8, k * .1122, k * .1122 + .04);
  const stops = [[328, 1], [401, .92], [465, .78], [541, .59], [626, .355], [712, .1], [744, 0]];
  return `<defs><clipPath id="hole"><path d="${h}"/></clipPath><clipPath id="bore"><path d="${bf}"/></clipPath>
<linearGradient id="rim" gradientUnits="userSpaceOnUse" x1="0" y1="328" x2="0" y2="744">${stops.map(([y, t]) => `<stop offset="${((y - 328) / 416).toFixed(3)}" stop-color="${mix(Y0, Y1, t)}"/>`).join('')}</linearGradient>
<linearGradient id="bg" x1="0" y1="0" x2=".2" y2="1"><stop offset=".25" stop-color="#585858"/><stop offset="1" stop-color="#949494"/></linearGradient></defs>
<path d="${path(rim)}" class="k rim"/>
<path d="${h}" fill="#e8e9ed"/><g clip-path="url(#hole)">${walls(ring, R, true, Y0, Y1)}
<path d="${arc(.824, 22, -8, 0, 6.3)}${arc(.823, 26, -8, 1.4, 4.3)}${dash}" class="c"/>${walls(sun, Q, false, G0, G1)}</g>
<path d="${o}${h}" fill-rule="evenodd" class="k ring"/>
<path d="${sf}" class="k sun"/><path d="${bf}" fill="url(#bg)"/><path d="${bb}" clip-path="url(#bore)" fill="#e8e9ed" stroke="#111"/><path d="${bf}" class="k"/>
<path d="M1440 659V638" stroke="#3be83b" stroke-width="1.5"/><path d="M1440 659l19 4" stroke="#f33"/><path d="M1440 659l-13 5" stroke="#3ff"/>
<path d="M1438 635h4v4h-4z" fill="#3f3"/><path d="M1457 661h5v5h-5z" fill="#f33"/><path d="M1424 662h6v6h-6z" fill="#3ff"/>`;
}
define('graphics-view', () => `<style>:host{display:flex;flex-direction:column;align-items:center;flex:1;min-width:0;position:relative;background:#e8e9ed}
.bar{position:relative;display:flex;align-items:center;gap:14px;height:46px;box-sizing:border-box;margin:7px 0 0;padding:0 10px;background:var(--ribbon);border:1px solid #9b9fa1;--pw:36px}
.bar tool-btn[pressed]{margin:0 -6px}.scene{position:absolute;inset:0;width:100%;height:100%}
.k{fill:none;stroke:#16160e;stroke-width:1;stroke-linejoin:round}.rim{fill:url(#rim)}.ring{fill:#f9f884}.sun{fill:#a5a5a5}.c{fill:none;stroke:#11b9e0;stroke-width:1}</style>
<svg class="scene" viewBox="420 251 1500 773" preserveAspectRatio="xMaxYMid slice" role="img" aria-label="Couronne et soleil">${gearScene()}</svg>
<div class="bar">${[['eyecam', 'Vue', 'blue'], ['eyeclock', 'Vue précédente', 'blue'], ['refit', 'Ajuster'], ['zin', 'Zoom avant'], ['zout', 'Zoom arrière'], ['repaint', 'Redessiner'], ['render', 'Rendu'], ['style', 'Style'], ['curveeye', 'Arêtes', 'blue pressed'], ['hex', 'Orientations'], ['viewmgr', 'Gestionnaire de vues'], ['cubel', 'Normale'], ['cubed', 'Normale active'], ['persp', 'Perspective'], ['section', 'Section'], ['datum', 'Références'], ['annot', 'Annotations', 'pressed'], ['spin', 'Centre de rotation', 'pressed'], ['sim', 'Simulation'], ['pause', 'Pause'], ['shade', 'Résultats']].map(([i, l, x = '']) => `<tool-btn icon="${i}" label="${l}" ${x}></tool-btn>`).join('')}</div>`);

define('status-bar', () => `<style>:host{display:flex;align-items:center;height:56px;box-sizing:border-box;padding:6px 27px 0 9px;background:var(--panel);border-top:1px solid var(--line);--pw:32px}
.l,.r{display:flex;align-items:center}.r{margin-left:auto;padding-bottom:5px}.l{gap:10px}.l tool-btn+tool-btn+tool-btn{margin:0 7px 0 4px}.l c-sep,.r c-sep{height:36px}
.r>c-sep{height:42px}
button{all:unset;box-sizing:border-box;display:flex;align-items:center;justify-content:center;width:60px;height:42px;border:1px solid #aab1b3;background:#f9fafa}
label{display:flex;align-items:center;width:270px;height:36px;box-sizing:border-box;border:1px solid #aab1b3;background:#f7f8f8;margin-left:149px}
select{all:unset;flex:1;height:34px;line-height:34px;padding-left:10px;font-size:17px}label c-sep{margin-right:6px;height:34px}label c-caret{margin-right:7px}</style>
<div class="l"><tool-btn pressed icon="panel" label="Navigateur"></tool-btn><tool-btn icon="globe" label="Navigateur Web"></tool-btn><tool-btn icon="square" label="Plein écran"></tool-btn><c-sep></c-sep></div>
<div class="r"><c-sep></c-sep><c-sep style="margin:0 9px 0 6px"></c-sep><tool-btn icon="binoc" label="Rechercher" menu></tool-btn><c-sep style="margin:0 9px 0 9px"></c-sep><tool-btn icon="dash" label="Sélection" menu></tool-btn><tool-btn icon="pick" label="Sélection géométrique" style="margin:0 9px 0 15px"></tool-btn>
<button aria-label="Modèle 3D"><c-icon name="box" size="32"></c-icon></button><label><select aria-label="Filtre de sélection"><option>Géométrie</option></select><c-sep></c-sep><c-caret></c-caret></label></div>`);

define('creo-app', () => `<style>:host{display:flex;flex-direction:column;min-height:100vh}main{display:flex;flex:1;min-height:0}</style>
<title-bar></title-bar><ribbon-tabs></ribbon-tabs><ribbon-bar></ribbon-bar><main><model-panel></model-panel><graphics-view></graphics-view></main><status-bar></status-bar>`);
</script>
</body>
</html>
